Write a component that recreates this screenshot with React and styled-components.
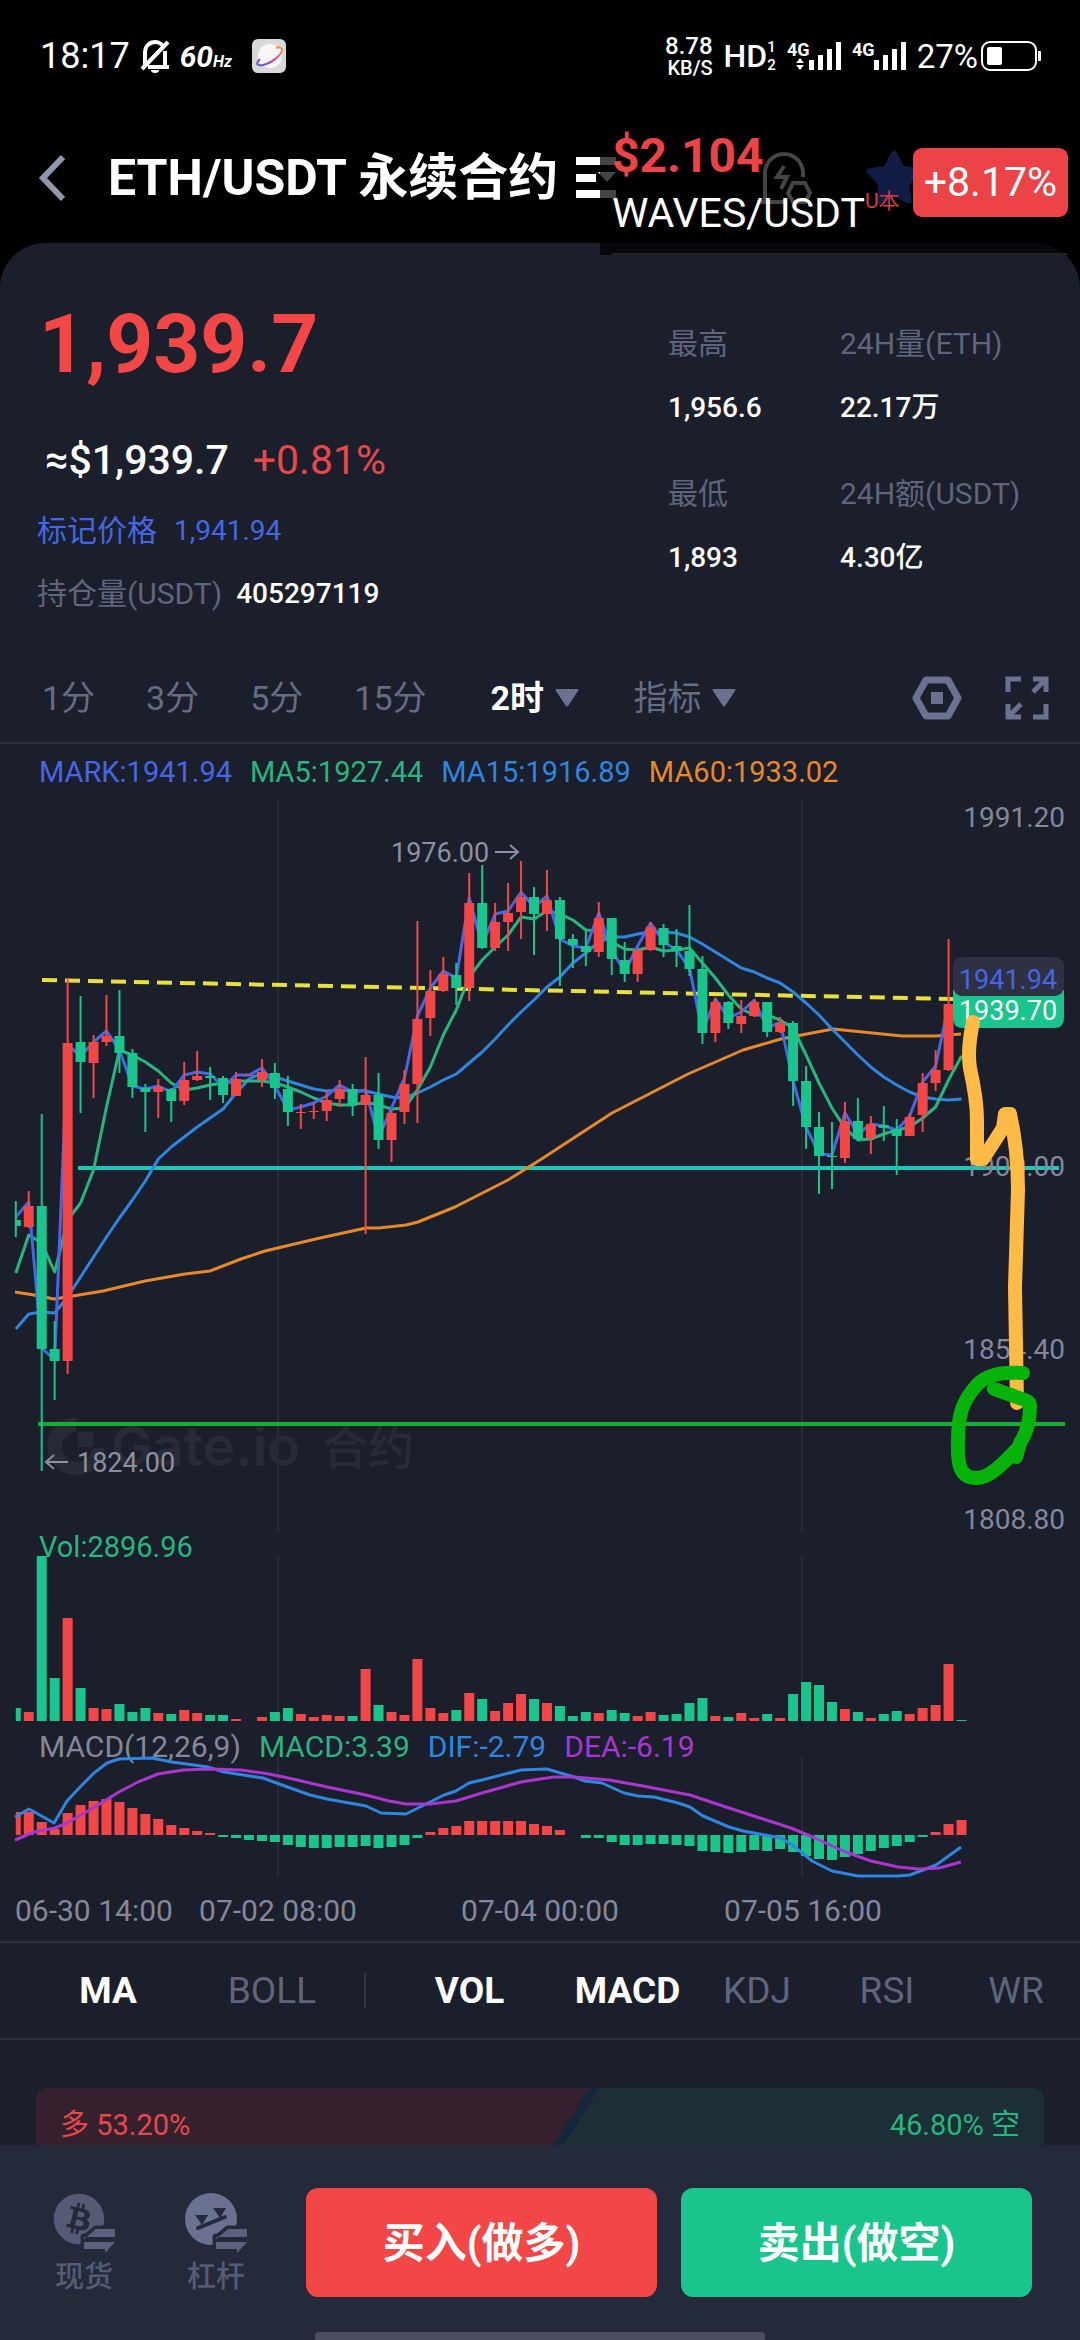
import React from "react";
import styled, { createGlobalStyle } from "styled-components";
import { FaBitcoin } from "react-icons/fa";

const RED = "#f34647";
const GREEN = "#19c48d";

const GlobalStyle = createGlobalStyle`
  * {
    box-sizing: border-box;
  }
  body {
    margin: 0;
    background: #000;
    color: #fff;
    font-family: Roboto, "Noto Sans CJK SC", sans-serif;
  }
  button, select {
    padding: 0;
    border: 0;
    background: none;
    color: inherit;
    font: inherit;
  }
`;

const Page = styled.div`
  position: relative;
  min-height: 100vh;
  display: flex;
  flex-direction: column;
`;

const StatusBar = styled.div`
  display: flex;
  justify-content: space-between;
  align-items: center;
  height: 112px;
  padding: 0 39px 0 40px;
`;
const StatusGroup = styled.div`
  display: flex;
  align-items: center;
  gap: ${(p) => p.$gap}px;
`;
const Clock = styled.span`
  font-size: 36px;
`;
const Rate = styled.span`
  font-size: 30px;
  font-weight: 700;
  font-style: italic;
  small {
    font-size: 16px;
  }
`;
const Speed = styled.span`
  display: flex;
  flex-direction: column;
  align-items: flex-end;
  font-size: 24px;
  line-height: 24px;
  font-weight: 500;
  small {
    font-size: 20px;
    line-height: 20px;
  }
`;
const Hd = styled.span`
  display: flex;
  align-items: center;
  font-size: 32px;
  font-weight: 500;
`;
const HdLines = styled.span`
  display: flex;
  flex-direction: column;
  font-size: 15px;
  line-height: 18px;
`;
const Percent = styled.span`
  font-size: 33px;
`;

const Header = styled.header`
  display: flex;
  align-items: center;
  height: 131px;
  padding: 0 158px 0 38px;
`;
const BackButton = styled.button`
  display: flex;
  width: 70px;
`;
const Title = styled.h1`
  margin: 0 18px 0 0;
  font-size: 50px;
  line-height: 56px;
  font-weight: 700;
  white-space: nowrap;
`;
const IconButton = styled.button`
  display: flex;
`;
const HeaderActions = styled.div`
  display: flex;
  align-items: center;
  gap: 54px;
  margin-left: auto;
`;

/* floating ticker drawn over the header by another app */
const Ticker = styled.div`
  position: absolute;
  top: 128px;
  right: 12px;
  width: 468px;
  height: 127px;
  padding-left: 12px;
  display: flex;
  align-items: flex-start;
  justify-content: space-between;
  background: rgba(0, 0, 0, 0.73);
  &::after {
    content: "";
    position: absolute;
    left: 12px;
    right: 0;
    bottom: 0;
    height: 2px;
    background: #232326;
  }
`;
const TickerPrice = styled.div`
  font-size: 48px;
  line-height: 56px;
  font-weight: 700;
  color: #ec4347;
`;
const TickerPair = styled.div`
  display: flex;
  align-items: flex-start;
  font-size: 41px;
  line-height: 58px;
  white-space: nowrap;
  sup {
    font-size: 21px;
    line-height: 34px;
    color: #d43c40;
  }
`;
const TickerChange = styled.div`
  flex: none;
  margin-top: 20px;
  padding: 0 11px;
  border-radius: 9px;
  background: #ec4347;
  font-size: 41px;
  line-height: 69px;
`;

const Panel = styled.main`
  flex: 1;
  border-radius: 45px 45px 0 0;
  background: #1b1e2b;
`;

const Summary = styled.section`
  display: flex;
  justify-content: space-between;
  height: 411px;
`;
const PriceColumn = styled.div`
  padding: 53px 0 0 37px;
`;
const LastPrice = styled.div`
  padding-left: 2px;
  margin-bottom: 40px;
  font-size: 82px;
  line-height: 96px;
  font-weight: 700;
  color: ${RED};
`;
const PriceRow = styled.div`
  display: flex;
  align-items: center;
  gap: ${(p) => p.$gap}px;
  padding-left: ${(p) => (p.$large ? 8 : 0)}px;
  margin-bottom: 23px;
  font-size: ${(p) => (p.$large ? 41 : 28)}px;
  line-height: ${(p) => (p.$large ? 56 : 40)}px;
  color: ${(p) => p.$color || "#fff"};
`;
const Strong = styled.span`
  font-weight: 500;
`;
const Rise = styled.span`
  color: #e9484b;
`;
const Label = styled.span`
  font-size: 30px;
  color: ${(p) => p.$color || "#5f657c"};
`;
const Stats = styled.dl`
  display: grid;
  grid-template-columns: 172px 1fr;
  grid-auto-rows: max-content;
  row-gap: 46px;
  width: 412px;
  margin: 0;
  padding-top: 81px;
`;
const Stat = styled.div`
  dt {
    font-size: 30px;
    line-height: 40px;
    color: #5f657c;
  }
  dd {
    margin: 24px 0 0;
    font-size: 28px;
    line-height: 40px;
    font-weight: 500;
  }
`;

const PeriodBar = styled.nav`
  display: flex;
  align-items: center;
  gap: 51px;
  height: 90px;
  padding: 0 31px 0 42px;
  border-bottom: 2px solid #2b2f3e;
  font-size: 34px;
  color: #666c84;
`;
const Period = styled.button`
  line-height: 48px;
`;
const Picker = styled.label`
  display: flex;
  align-items: center;
  gap: 10px;
  & + & {
    margin-left: 4px;
  }
  select {
    appearance: none;
    line-height: 48px;
    padding-left: ${(p) => (p.$active ? 13 : 0)}px;
    font-weight: ${(p) => (p.$active ? 700 : 400)};
    color: ${(p) => (p.$active ? "#fff" : "#666c84")};
  }
`;
const PeriodTools = styled.div`
  display: flex;
  align-items: center;
  gap: 43px;
  margin-left: auto;
`;

const Legend = styled.div`
  display: flex;
  gap: 18px;
  height: ${(p) => p.$height}px;
  margin-bottom: ${(p) => p.$overlap || 0}px;
  padding-left: 39px;
  font-size: ${(p) => p.$size || 29}px;
  line-height: ${(p) => p.$height}px;
  white-space: nowrap;
`;
const LegendItem = styled.span`
  color: ${(p) => p.$color};
`;
const Chart = styled.svg`
  display: block;
  width: 100%;
  height: auto;
  font-size: 28px;
  overflow: visible;
`;

const IndicatorBar = styled.nav`
  display: grid;
  grid-template-columns: 164fr 164fr 22fr 187fr 129fr 130fr 130fr 128fr;
  align-items: center;
  justify-items: center;
  height: 99px;
  padding-left: 26px;
  border-top: 2px solid #2b2f3e;
  border-bottom: 2px solid #2b2f3e;
`;
const Indicator = styled.button`
  font-size: 37px;
  line-height: 48px;
  font-weight: ${(p) => (p.$active ? 700 : 400)};
  color: ${(p) => (p.$active ? "#fff" : "#5f657c")};
`;
const Separator = styled.i`
  width: 2px;
  height: 36px;
  background: #2f3342;
`;

const Ratio = styled.div`
  display: flex;
  justify-content: space-between;
  margin: 48px 36px 0;
  padding: 0 24px;
  height: 57px;
  border-radius: 12px 12px 0 0;
  background: linear-gradient(
    122deg,
    #34212d 0 53%,
    #14253c 53% 54%,
    #1c2f36 54%
  );
  font-size: 29px;
  line-height: 74px;
  overflow: hidden;
`;
const RatioSide = styled.span`
  color: ${(p) => p.$color};
`;

const Footer = styled.footer`
  position: relative;
  display: flex;
  align-items: flex-start;
  gap: 24px;
  height: 195px;
  padding: 43px 48px 0 18px;
  background: #252a3a;
`;
const FooterLinks = styled.div`
  display: flex;
  width: 264px;
`;
const FooterLink = styled.a`
  flex: 1;
  display: flex;
  flex-direction: column;
  align-items: center;
  padding-top: 5px;
  font-size: 29px;
  line-height: 44px;
  font-weight: 500;
  color: #555b74;
  text-decoration: none;
`;
const OrderButton = styled.button`
  flex: 1;
  height: 109px;
  padding-bottom: 6px;
  border-radius: 12px;
  background: ${(p) => p.$color};
  font-size: 42px;
  font-weight: 700;
`;
const HomeIndicator = styled.i`
  position: absolute;
  left: 50%;
  bottom: 0;
  width: 450px;
  height: 8px;
  margin-left: -225px;
  border-radius: 4px 4px 0 0;
  background: #4a4e60;
`;

// [up, high, bodyTop, bodyBottom, low, volume, macd]
const candles = [
  [0, 401, 420, 426, 437, 13, 23],
  [1, 391, 406, 427, 428, 9, 23],
  [0, 314, 406, 549, 671, 165, 13],
  [0, 521, 549, 561, 600, 43, 6],
  [1, 178, 243, 561, 574, 103, 22],
  [0, 196, 242, 262, 313, 33, 30],
  [1, 235, 242, 263, 298, 13, 34],
  [1, 195, 236, 242, 246, 12, 36],
  [0, 190, 236, 253, 273, 17, 33],
  [0, 249, 253, 287, 298, 9, 27],
  [0, 284, 288, 292, 332, 13, 21],
  [1, 279, 287, 292, 318, 8, 16],
  [0, 288, 289, 301, 322, 7, 10],
  [1, 262, 280, 301, 305, 11, 7],
  [1, 251, 276, 280, 281, 8, 4],
  [0, 267, 276, 278, 300, 6, 2],
  [0, 276, 278, 295, 303, 6, -2],
  [1, 272, 279, 296, 296, 2, -3],
  [1, 275, 275, 276, 276, 0, -5],
  [1, 259, 272, 280, 287, 4, -6],
  [0, 263, 273, 288, 299, 9, -7],
  [0, 276, 289, 312, 326, 13, -10],
  [1, 304, 312, 313, 329, 7, -12],
  [1, 303, 311, 312, 319, 4, -13],
  [1, 291, 300, 311, 321, 6, -13],
  [1, 280, 289, 299, 307, 5, -12],
  [0, 284, 289, 305, 316, 5, -12],
  [1, 257, 295, 305, 434, 52, -11],
  [0, 273, 295, 340, 349, 16, -13],
  [1, 310, 313, 340, 362, 9, -12],
  [1, 270, 284, 312, 324, 6, -10],
  [1, 121, 219, 284, 323, 62, -3],
  [1, 170, 191, 218, 236, 13, 3],
  [1, 157, 174, 191, 192, 8, 7],
  [0, 163, 175, 188, 205, 11, 9],
  [1, 73, 103, 188, 201, 28, 14],
  [0, 65, 103, 148, 149, 22, 14],
  [1, 103, 122, 148, 151, 10, 14],
  [1, 83, 113, 122, 151, 18, 14],
  [1, 61, 97, 112, 139, 27, 14],
  [0, 87, 97, 114, 155, 22, 11],
  [1, 70, 100, 114, 131, 18, 9],
  [0, 97, 100, 139, 186, 15, 5],
  [0, 134, 139, 145, 168, 5, 0],
  [0, 131, 146, 152, 166, 9, -3],
  [1, 102, 118, 152, 157, 8, -3],
  [0, 118, 118, 159, 175, 11, -7],
  [0, 142, 160, 174, 182, 8, -10],
  [1, 149, 150, 174, 182, 5, -10],
  [1, 122, 127, 150, 151, 9, -9],
  [0, 124, 128, 145, 157, 6, -9],
  [0, 129, 146, 151, 167, 7, -10],
  [0, 105, 151, 169, 176, 18, -11],
  [0, 156, 169, 233, 244, 23, -16],
  [1, 198, 202, 233, 242, 5, -17],
  [0, 201, 202, 223, 229, 4, -18],
  [1, 200, 216, 224, 233, 8, -17],
  [1, 199, 202, 216, 217, 3, -15],
  [0, 202, 202, 232, 237, 7, -16],
  [1, 217, 223, 232, 233, 3, -14],
  [0, 221, 223, 281, 306, 27, -17],
  [0, 266, 281, 327, 349, 39, -21],
  [0, 312, 327, 356, 394, 36, -24],
  [0, 322, 356, 357, 389, 19, -25],
  [1, 302, 321, 358, 363, 12, -22],
  [0, 298, 321, 339, 341, 9, -19],
  [1, 316, 324, 338, 354, 3, -16],
  [0, 306, 325, 328, 341, 7, -13],
  [0, 319, 329, 336, 375, 10, -11],
  [1, 313, 317, 336, 336, 7, -7],
  [1, 273, 283, 315, 332, 13, -2],
  [1, 250, 270, 283, 291, 16, 3],
  [1, 139, 204, 270, 271, 57, 11],
  [0, 204, 204, 205, 205, 1, 15],
];

const mark = [
  417, 402, 548, 560, 245, 256, 242, 231, 250, 286, 289, 286, 292, 275, 272,
  274, 287, 275, 275, 268, 286, 310, 307, 303, 296, 285, 292, 290, 338, 308,
  278, 216, 188, 171, 178, 98, 145, 114, 111, 92, 107, 96, 139, 146, 148, 113,
  150, 172, 146, 123, 142, 150, 168, 232, 199, 218, 212, 200, 228, 222, 281,
  327, 354, 355, 313, 334, 324, 326, 330, 316, 282, 266, 205,
];
const ma5 = [
  473, 435, 443, 472, 420, 403, 370, 307, 250, 255, 262, 271, 283, 290, 288,
  285, 283, 281, 281, 281, 283, 287, 292, 298, 303, 305, 305, 302, 305, 309,
  308, 290, 267, 235, 210, 177, 160, 147, 135, 117, 119, 111, 114, 120, 130,
  131, 142, 149, 150, 147, 151, 150, 148, 163, 178, 195, 209, 215, 215, 220,
  228, 255, 283, 308, 328, 340, 339, 334, 330, 327, 318, 307, 280, 256,
];
const ma15 = [
  529, 514, 512, 513, 497, 477, 457, 437, 418, 400, 381, 359, 347, 337, 327,
  318, 309, 293, 279, 273, 277, 281, 285, 289, 291, 290, 291, 291, 294, 297,
  298, 293, 287, 280, 274, 263, 252, 239, 225, 212, 200, 187, 177, 163, 153,
  142, 137, 137, 134, 132, 132, 133, 137, 144, 152, 160, 168, 172, 178, 183,
  192, 203, 215, 229, 242, 255, 267, 277, 285, 292, 297, 299, 300, 299,
];
const ma60 =
  "15,492 34,495 54,499 73,496 103,491 145,481 185,474 210,471 241,459 265,451 320,438 366,428 379,428 406,425 418,422 455,407 508,380 540,360 612,313 688,274 743,250 781,239 812,233 833,229 902,236 936,236 961,234";
const dif =
  "15,60 29,52 54,66 67,44 81,29 94,16 107,6 119,2 152,1 172,5 208,10 224,15 263,21 282,28 310,38 327,42 366,49 381,56 406,57 430,45 444,38 456,34 469,26 482,23 521,13 547,12 574,20 585,24 602,26 624,36 638,39 654,40 678,46 690,50 703,59 729,70 743,74 781,81 795,90 812,104 832,114 858,119 898,119 910,118 936,108 950,98 961,90";
const dea =
  "15,83 34,75 55,71 67,66 93,51 119,35 138,25 158,17 183,13 210,12 241,13 269,17 293,22 327,30 366,38 389,44 406,47 430,47 456,44 482,36 521,25 540,22 554,20 574,20 609,23 643,29 690,38 729,51 760,61 791,71 815,81 843,94 871,104 898,110 919,112 939,111 961,105";

const x = (i) => 15.8 + i * 12.955;
const toPoints = (values) => values.map((v, i) => `${x(i)},${v}`).join(" ");
const tone = (up) => (up ? RED : GREEN);

const Grid = ({ height }) => (
  <path d={`M278 0V${height}M802 0V${height}`} stroke="#272a37" strokeWidth="2" />
);

const PriceChart = () => (
  <Chart viewBox="0 0 1080 732">
    <Grid height={732} />
    <g fill="#282b37">
      <path d="M76 617v15a15 15 0 1 0 16 16h13a29 29 0 1 1-29-31z" />
      <path d="M78 632h15v15H78z" />
      <text x="111" y="666" fontSize="55" fontWeight="600" fontFamily="Inter">
        Gate.io
      </text>
      <text x="322" y="664" fontSize="46" fontWeight="500">
        合约
      </text>
    </g>
    <g fill="none" strokeWidth="3" strokeLinejoin="round">
      <path d="M42 180L953 199" stroke="#e8e03c" strokeWidth="4" strokeDasharray="15 8" />
      <path d="M78 368H1059" stroke="#20c6b5" strokeWidth="4" />
      <path d="M38 624H1065" stroke="#1aab34" strokeWidth="4" />
      <polyline points={ma60} stroke="#e6892a" />
      <polyline points={toPoints(ma15)} stroke="#2e86e0" />
      <polyline points={toPoints(ma5)} stroke="#28b580" />
      <polyline points={toPoints(mark)} stroke="#4468ea" />
    </g>
    {candles.slice(0, 73).map(([up, high, top, bottom, low], i) => (
      <g key={i} fill={tone(up)}>
        <rect x={x(i) - 1} y={high} width="2" height={low - high} />
        <rect
          x={i ? x(i) - 5 : x(i)}
          y={top}
          width={i ? 10 : 5}
          height={Math.max(bottom - top, 1)}
        />
      </g>
    ))}
    <g fill="#8c90a2" fontSize="27">
      <text x="391" y="62">1976.00</text>
      <text x="77" y="672">1824.00</text>
      <path
        d="M495 52h23m-8-7l8 7-8 7M68 662H46m8-7l-8 7 8 7"
        fill="none"
        stroke="#8c90a2"
        strokeWidth="2"
      />
    </g>
    <g fill="#84889a" textAnchor="end">
      <text x="1065" y="27">1991.20</text>
      <text x="1065" y="376">1900.00</text>
      <text x="1065" y="559">1854.40</text>
      <text x="1065" y="729">1808.80</text>
    </g>
    <path d="M953 190h111v28q0 10-10 10H963q-10 0-10-10z" fill={GREEN} />
    <rect x="953" y="157" width="111" height="39" rx="9" fill="#2d3142" />
    <g fontSize="27" textAnchor="middle">
      <text x="1008" y="189" fill="#4566e6">1941.94</text>
      <text x="1008" y="220" fill="#fff">1939.70</text>
    </g>
    <g fill="none" strokeLinecap="round" strokeLinejoin="round">
      <path
        d="M973 222Q967 250 970 268Q977 300 977 320L977 359L983 359L1003 328L1005 314L1010 314Q1018 350 1018 390L1015 487L1017 603"
        stroke="#ffbb45"
        strokeWidth="14"
      />
      <path
        d="M1023 573C1000 572 985 575 976 586C962 602 958 615 958 640C957 665 960 678 976 678C991 678 1005 661 1016 650L1016 657L1020 643Q1030 628 1030 606Q1030 602 1025 600L994 589"
        stroke="#06b30b"
        strokeWidth="14"
      />
    </g>
  </Chart>
);

const VolumeChart = () => (
  <Chart viewBox="0 0 1080 165">
    <Grid height={165} />
    {candles.map(([up, , , , , volume], i) => (
      <rect
        key={i}
        x={i ? x(i) - 5 : x(i)}
        y={165 - volume}
        width={i ? 10 : 5}
        height={volume}
        fill={tone(up)}
      />
    ))}
  </Chart>
);

const MacdChart = () => (
  <Chart viewBox="0 0 1080 184">
    <Grid height={120} />
    {candles.map(([, , , , , , macd], i) => (
      <rect
        key={i}
        x={i ? x(i) - 5 : x(i)}
        y={macd > 0 ? 78 - macd : 78}
        width={i ? 10 : 5}
        height={Math.abs(macd)}
        fill={tone(macd > 0)}
      />
    ))}
    <g fill="none" strokeWidth="3" strokeLinejoin="round">
      <polyline points={dif} stroke="#2e86e0" />
      <polyline points={dea} stroke="#a936cf" />
    </g>
    <g fill="#84889a" fontSize="30">
      <text x="15" y="164">06-30 14:00</text>
      <g textAnchor="middle">
        <text x="278" y="164">07-02 08:00</text>
        <text x="540" y="164">07-04 00:00</text>
        <text x="803" y="164">07-05 16:00</text>
      </g>
    </g>
  </Chart>
);

const BellOffIcon = () => (
  <svg width="30" height="34" viewBox="0 0 30 34" fill="none" stroke="#fff" strokeWidth="4">
    <path d="M5 28V13a10 10 0 0 1 18-6M25 12v16M8 28h21M2 30L28 3" />
    <path d="M11 31a4 3 0 0 0 8 0z" fill="#fff" stroke="none" />
  </svg>
);

const PlanetIcon = () => (
  <svg width="34" height="34" viewBox="0 0 34 34">
    <defs>
      <linearGradient id="ring" x1="0" y1="1" x2="1" y2="0">
        <stop offset="0" stopColor="#4f5be0" />
        <stop offset="0.5" stopColor="#d0459a" />
        <stop offset="1" stopColor="#f59a3c" />
      </linearGradient>
    </defs>
    <rect width="34" height="34" rx="6" fill="#d9d9d9" />
    <circle cx="18" cy="17" r="12" fill="#f7f6f8" />
    <path
      d="M8 20C3 25 5 27 11 26C20 24 31 15 30 10C29 8 26 8 24 9"
      fill="none"
      stroke="url(#ring)"
      strokeWidth="2"
    />
  </svg>
);

const SignalIcon = ({ data }) => (
  <svg width="54" height="36" viewBox="0 -4 54 36" fill="#fff">
    <text x="0" y="14" fontSize="18" fontWeight="700">4G</text>
    {data && <path d="M13 16l4 5H9zM13 28l4-5H9z" />}
    <path d="M22 18h5v10h-5zM31 13h5v15h-5zM40 7h5v21h-5zM49 0h5v28h-5z" />
  </svg>
);

const BatteryIcon = () => (
  <svg width="60" height="30" viewBox="0 0 60 30">
    <rect x="1" y="1" width="54" height="28" rx="8" fill="none" stroke="#fff" strokeWidth="2" />
    <rect x="6" y="6" width="15" height="18" rx="2" fill="#fff" />
    <path d="M57 10h2q1 0 1 1v8q0 1-1 1h-2z" fill="#fff" />
  </svg>
);

const Caret = () => (
  <svg width="24" height="18" viewBox="0 0 24 18">
    <path d="M1 0h22q1 1 0 2L13 17q-1 1-2 0L1 2q-1-1 0-2z" fill="#6b7190" />
  </svg>
);

const swapArrows = "M31 46L43 36H62V44H31zM31 49H62L52 60V56H31z";

const SpotIcon = () => (
  <svg width="62" height="62" viewBox="0 0 62 62" fill="#6b7190">
    <FaBitcoin x="0" y="0" size={52} />
    <path d={swapArrows} stroke="#252a3a" strokeWidth="7" strokeLinejoin="round" />
    <path d={swapArrows} fill="#5c627d" />
  </svg>
);

const MarginIcon = () => (
  <svg width="62" height="62" viewBox="0 0 62 62" fill="#6b7190">
    <circle cx="26" cy="26" r="26" />
    <path d="M13 35L40 24" stroke="#252a3a" strokeWidth="4" strokeLinecap="round" />
    <path d="M10 22h13l-6 10zM28 15h13l-6 10z" fill="#252a3a" />
    <path d={swapArrows} stroke="#252a3a" strokeWidth="7" strokeLinejoin="round" />
    <path d={swapArrows} fill="#5c627d" />
  </svg>
);

const App = () => {
  return (
    <Page>
      <GlobalStyle />
      <StatusBar>
        <StatusGroup $gap={20}>
          <StatusGroup $gap={10}>
            <Clock>18:17</Clock>
            <BellOffIcon />
            <Rate>
              60<small>Hz</small>
            </Rate>
          </StatusGroup>
          <PlanetIcon />
        </StatusGroup>
        <StatusGroup $gap={11}>
          <Speed>
            8.78<small>KB/S</small>
          </Speed>
          <Hd>
            HD
            <HdLines>
              <span>1</span>
              <span>2</span>
            </HdLines>
          </Hd>
          <SignalIcon data />
          <SignalIcon />
          <StatusGroup $gap={3}>
            <Percent>27%</Percent>
            <BatteryIcon />
          </StatusGroup>
        </StatusGroup>
      </StatusBar>

      <Header>
        <BackButton aria-label="返回">
          <svg width="28" height="48" viewBox="0 0 28 48">
            <path d="M25 3L5 24l20 21" fill="none" stroke="#9097ad" strokeWidth="6" />
          </svg>
        </BackButton>
        <Title>ETH/USDT 永续合约</Title>
        <IconButton aria-label="合约列表">
          <svg width="40" height="42" viewBox="0 0 40 42" fill="#fff">
            <path d="M0 0h40v8H0zM0 17h20v8H0zM0 33h40v8H0zM22 15h18l-9 10z" />
          </svg>
        </IconButton>
        <HeaderActions>
          <IconButton aria-label="预警">
            <svg width="56" height="54" viewBox="0 0 56 54" fill="none" stroke="#fff" strokeWidth="4">
              <path d="M9 50V22a19 19 0 0 1 38 0v4M1 51h28" />
              <path d="M28 15l-7 11h10l-6 12" />
              <path d="M37 32h12l5 10-5 9H37l-5-9z" />
            </svg>
          </IconButton>
          <IconButton aria-label="收藏">
            <svg width="56" height="56" viewBox="0 0 56 56">
              <path
                d="M28 3l8 15 17 3-12 13 2 17-15-7-15 7 2-17L3 21l17-3z"
                fill="#3f6bff"
                stroke="#3f6bff"
                strokeWidth="5"
                strokeLinejoin="round"
              />
            </svg>
          </IconButton>
        </HeaderActions>
      </Header>

      <Panel>
        <Summary>
          <PriceColumn>
            <LastPrice>1,939.7</LastPrice>
            <PriceRow $large $gap={24}>
              <Strong>≈$1,939.7</Strong>
              <Rise>+0.81%</Rise>
            </PriceRow>
            <PriceRow $gap={17} $color="#4468e3">
              <Label $color="#4468e3">标记价格</Label>
              <span>1,941.94</span>
            </PriceRow>
            <PriceRow $gap={14}>
              <Label>持仓量(USDT)</Label>
              <Strong>405297119</Strong>
            </PriceRow>
          </PriceColumn>
          <Stats>
            <Stat>
              <dt>最高</dt>
              <dd>1,956.6</dd>
            </Stat>
            <Stat>
              <dt>24H量(ETH)</dt>
              <dd>22.17万</dd>
            </Stat>
            <Stat>
              <dt>最低</dt>
              <dd>1,893</dd>
            </Stat>
            <Stat>
              <dt>24H额(USDT)</dt>
              <dd>4.30亿</dd>
            </Stat>
          </Stats>
        </Summary>

        <PeriodBar>
          {["1分", "3分", "5分", "15分"].map((period) => (
            <Period key={period}>{period}</Period>
          ))}
          <Picker $active>
            <select aria-label="周期">
              <option>2时</option>
            </select>
            <Caret />
          </Picker>
          <Picker>
            <select aria-label="指标">
              <option>指标</option>
            </select>
            <Caret />
          </Picker>
          <PeriodTools>
            <IconButton aria-label="设置">
              <svg width="50" height="44" viewBox="0 0 50 44">
                <path
                  d="M14 4h22l10 18-10 18H14L4 22z"
                  fill="none"
                  stroke="#6b7190"
                  strokeWidth="7"
                  strokeLinejoin="round"
                />
                <path d="M19 16h12v12H19z" fill="#6b7190" />
              </svg>
            </IconButton>
            <IconButton aria-label="全屏">
              <svg width="44" height="44" viewBox="0 0 44 44" fill="none" stroke="#6b7190" strokeWidth="5">
                <path d="M3 16V3h13M28 3h13v13M41 28v13H28M16 41H3V28M40 4L28 16M4 40l12-12" />
              </svg>
            </IconButton>
          </PeriodTools>
        </PeriodBar>

        <Legend $height={56}>
          <LegendItem $color="#4566e6">MARK:1941.94</LegendItem>
          <LegendItem $color="#28b580">MA5:1927.44</LegendItem>
          <LegendItem $color="#2e86e0">MA15:1916.89</LegendItem>
          <LegendItem $color="#e6892a">MA60:1933.02</LegendItem>
        </Legend>
        <PriceChart />
        <Legend $height={30} $overlap={-6}>
          <LegendItem $color="#28b580">Vol:2896.96</LegendItem>
        </Legend>
        <VolumeChart />
        <Legend $height={52} $overlap={-16} $size={30}>
          <LegendItem $color="#84889a">MACD(12,26,9)</LegendItem>
          <LegendItem $color="#28b580">MACD:3.39</LegendItem>
          <LegendItem $color="#2e86e0">DIF:-2.79</LegendItem>
          <LegendItem $color="#a936cf">DEA:-6.19</LegendItem>
        </Legend>
        <MacdChart />

        <IndicatorBar>
          <Indicator $active>MA</Indicator>
          <Indicator>BOLL</Indicator>
          <Separator />
          <Indicator $active>VOL</Indicator>
          <Indicator $active>MACD</Indicator>
          <Indicator>KDJ</Indicator>
          <Indicator>RSI</Indicator>
          <Indicator>WR</Indicator>
        </IndicatorBar>

        <Ratio>
          <RatioSide $color="#e9484b">多 53.20%</RatioSide>
          <RatioSide $color="#28b580">46.80% 空</RatioSide>
        </Ratio>
      </Panel>

      <Footer>
        <FooterLinks>
          <FooterLink href="#spot">
            <SpotIcon />
            现货
          </FooterLink>
          <FooterLink href="#margin">
            <MarginIcon />
            杠杆
          </FooterLink>
        </FooterLinks>
        <OrderButton $color={RED}>买入(做多)</OrderButton>
        <OrderButton $color={GREEN}>卖出(做空)</OrderButton>
        <HomeIndicator />
      </Footer>

      <Ticker>
        <div>
          <TickerPrice>$2.104</TickerPrice>
          <TickerPair>
            WAVES/USDT<sup>U本</sup>
          </TickerPair>
        </div>
        <TickerChange>+8.17%</TickerChange>
      </Ticker>
    </Page>
  );
};

export default App;
